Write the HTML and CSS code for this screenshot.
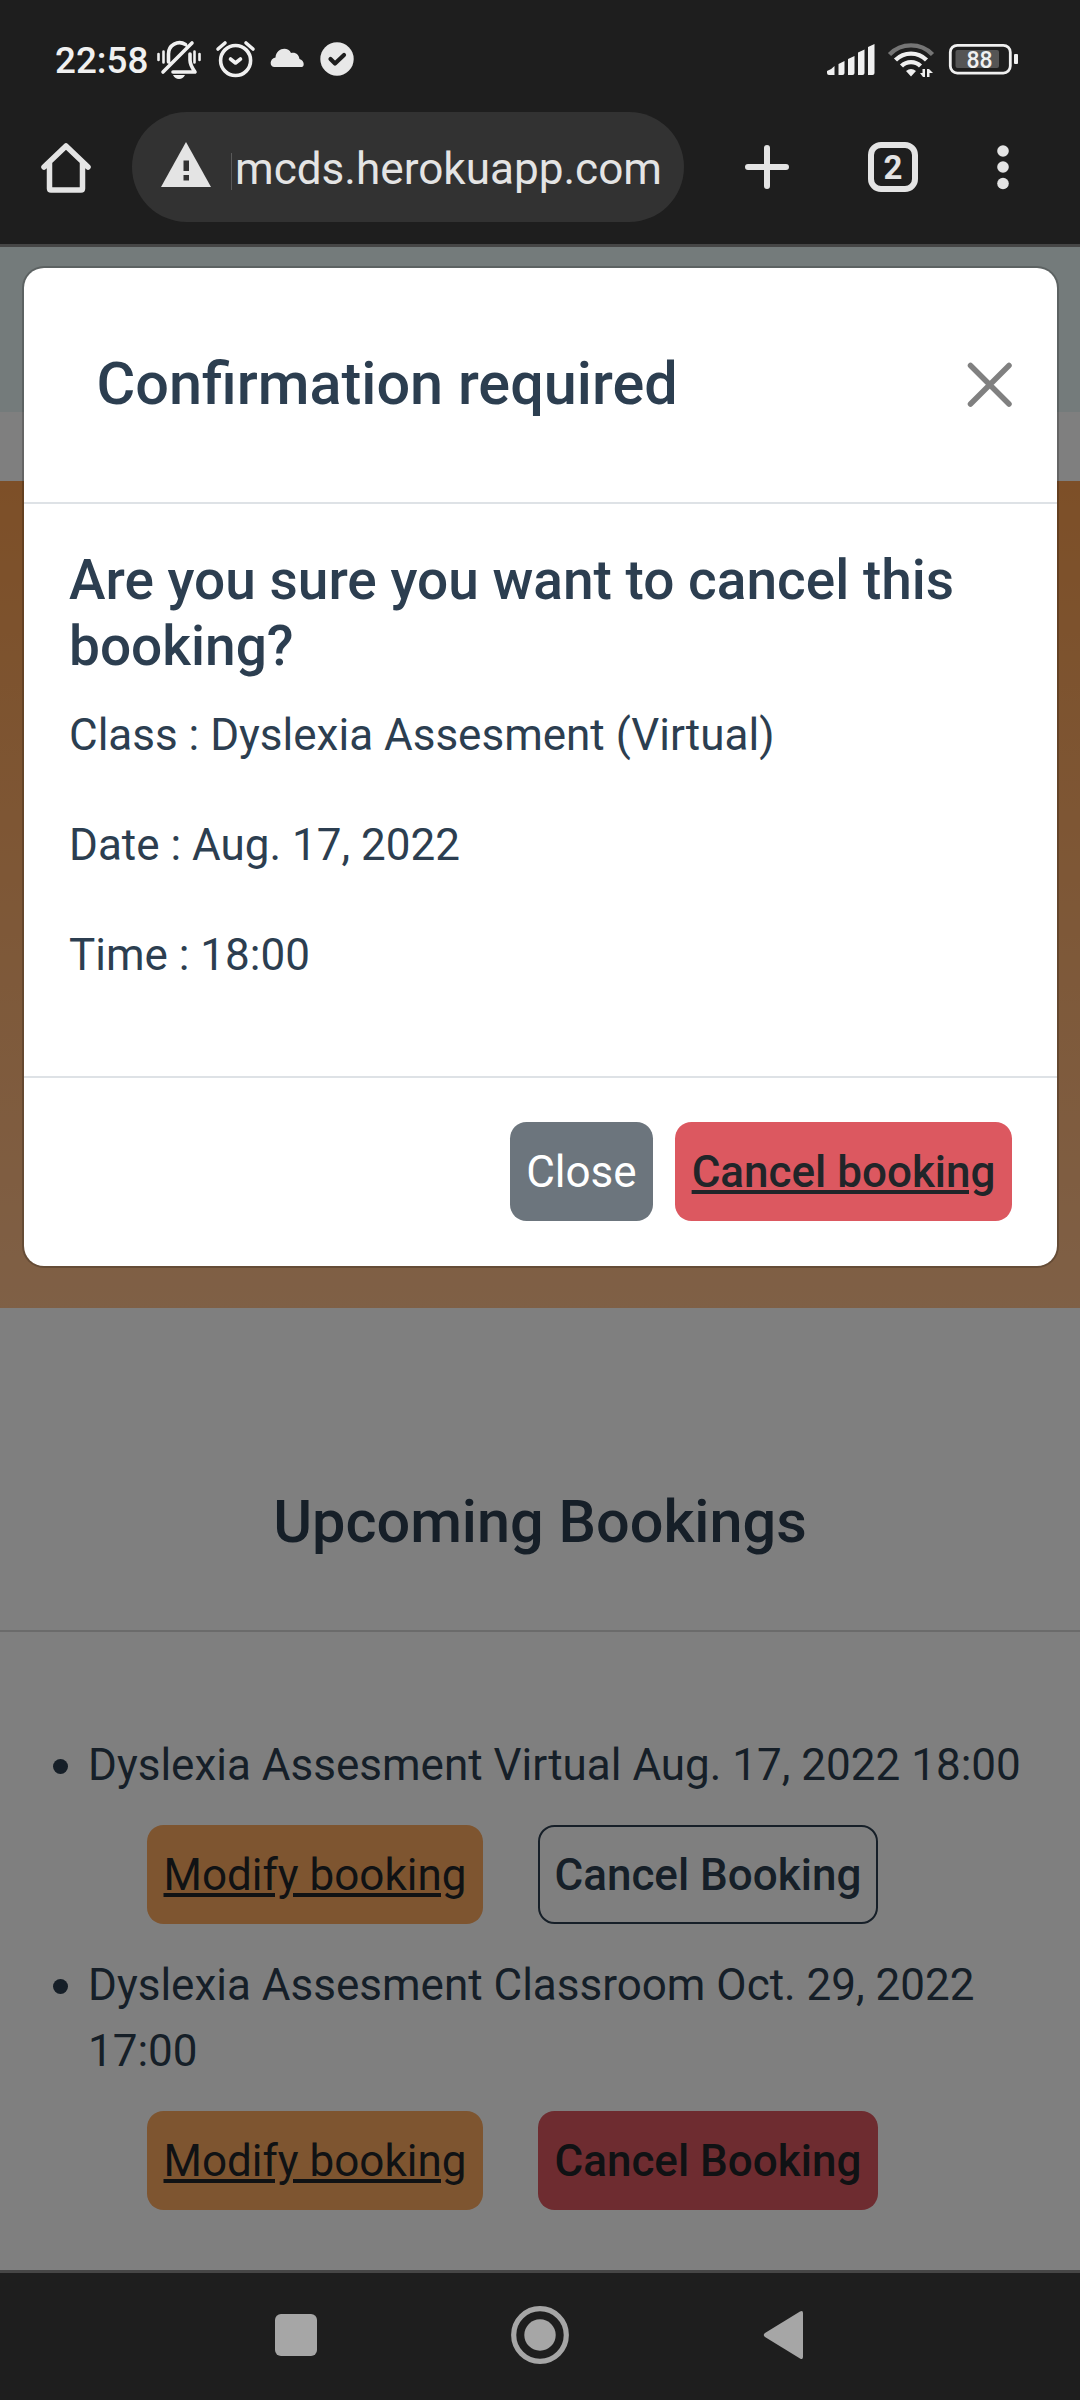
FILE: index.html
```html
<!DOCTYPE html>
<html lang="en">
<head>
<meta charset="utf-8">
<title>Bookings</title>
<link rel="stylesheet" href="styles.css">
</head>
<body>
<div class="phone">
  <header class="chrome">
    <div class="status">
      <span class="clock">22:58</span>
      <svg class="status-left" width="204" height="44" viewBox="156 38 204 44" fill="none" stroke="#f0f0f0" stroke-width="3.600" stroke-linecap="round" stroke-linejoin="round">
        <path d="M168.500 62V54a11 11 0 0 1 17-9.500M190 54v6q0 5 5 12h-22M163 72l29-29"/>
        <path d="M158.500 54v6M163.500 51.500v11M194.500 51.500v11M199.500 54v6" stroke-width="2.600"/>
        <path d="M173 75h12q-2 4-6 4t-6-4z" fill="#f0f0f0" stroke="none"/>
        <circle cx="235.600" cy="60.500" r="15"/>
        <path d="M218 49l7-6M253 49l-7-6M230.500 59l5 4 5-4"/>
        <path d="M274.500 67c-5 0-5.500-8 1-9.500C276 48 288 46 291 53c5-1 8 2 8.500 6 5 1 5.500 8 2 8z" fill="#e8e8e8" stroke="none"/>
        <circle cx="337" cy="59" r="16.700" fill="#e8e8e8" stroke="none"/>
        <path d="M330.500 59l4.500 4.500 9-8.500" stroke="#1e1e1e" stroke-width="4.200"/>
      </svg>
      <svg class="status-right" width="196" height="44" viewBox="826 38 196 44" fill="#f0f0f0">
        <path d="M829 75q-2 0-2-2v-2q4-1 7.500-5v9zM838.500 64l6-3v12q0 2-2 2h-4zM848 59l6.500-3v17q0 2-2 2H848zM858 52.500l6.500-3V73q0 2-2 2H858zM868 47l6.500-3v29q0 2-2 2H868z"/>
        <g fill="none" stroke="#f0f0f0" stroke-width="4.400">
          <path d="M889.500 54.500a30 30 0 0 1 43 0" stroke="#757575"/>
          <path d="M895.500 60a22 22 0 0 1 31 0"/>
          <path d="M901.500 66a13.500 13.500 0 0 1 19 0"/>
        </g>
        <path d="M906 71q5-4 10 0l-5 5.500zM922.500 69h2.500v8h-2l-3-4h2.500zM927 77v-8h2l4 4h-3.500v4z"/>
        <rect x="950.300" y="45.300" width="60" height="27.800" rx="7" fill="none" stroke="#f0f0f0" stroke-width="2.800"/>
        <rect x="955.500" y="50" width="43.500" height="18" rx="2" fill="#555"/>
        <rect x="1014" y="54" width="4" height="10" rx="1"/>
        <text x="979.500" y="67.500" class="charge">88</text>
      </svg>
    </div>
    <div class="toolbar">
      <svg class="home" width="52" height="52" viewBox="40 140 52 52" fill="none" stroke="#e4e4e4" stroke-width="5.500" stroke-linejoin="round" stroke-linecap="round"><path d="M44 166l22-21 22 21M49.500 162v25.500q0 1.500 1.500 1.500h30q1.500 0 1.500-1.500V162"/></svg>
      <div class="omnibox">
        <svg width="52" height="46" viewBox="0 0 52 46"><path d="M26 0L51 45H1z" fill="#e4e4e4"/><path d="M23.500 18.500h5.500v10.500h-5.500zM23.500 33h5.500v5.500h-5.500z" fill="#323232"/></svg>
        <span class="fade"></span><span class="url">mcds.herokuapp.com</span>
      </div>
      <svg class="actions" width="270" height="52" viewBox="744 141 270 52" fill="none" stroke="#e4e4e4" stroke-width="6" stroke-linecap="round">
        <path d="M748 167h38M767 148v38"/>
        <rect x="871" y="145" width="44" height="44" rx="10"/>
        <text x="893" y="179" class="tab-count">2</text>
        <g fill="#e4e4e4" stroke="none"><circle cx="1003" cy="151" r="5.800"/><circle cx="1003" cy="167" r="5.800"/><circle cx="1003" cy="183.500" r="5.800"/></g>
      </svg>
    </div>
  </header>

  <main class="page">
    <div class="topbar"></div>
    <div class="hero"></div>
    <h2 class="heading">Upcoming Bookings</h2>
    <ul class="bookings">
      <li class="booking">
        <p class="booking-name">Dyslexia Assesment Virtual Aug. 17, 2022 18:00</p>
        <div class="booking-actions"><a class="btn btn-modify">Modify booking</a><button class="btn btn-outline">Cancel Booking</button></div>
      </li>
      <li class="booking">
        <p class="booking-name">Dyslexia Assesment Classroom Oct. 29, 2022 17:00</p>
        <div class="booking-actions"><a class="btn btn-modify">Modify booking</a><button class="btn btn-danger">Cancel Booking</button></div>
      </li>
    </ul>
    <div class="backdrop"></div>
    <section class="modal">
      <div class="modal-header">
        <h5 class="modal-title">Confirmation required</h5>
        <svg width="46" height="46" viewBox="0 0 46 46" stroke="#808080" stroke-width="5.500" stroke-linecap="round"><path d="M3.500 3.500l38.500 38.500M42 3.500L3.500 42"/></svg>
      </div>
      <div class="modal-body">
        <h5 class="question">Are you sure you want to cancel this booking?</h5>
        <p class="detail">Class : Dyslexia Assesment (Virtual)</p>
        <p class="detail">Date : Aug. 17, 2022</p>
        <p class="detail">Time : 18:00</p>
      </div>
      <div class="modal-footer">
        <button class="btn btn-close">Close</button>
        <a class="btn btn-danger btn-link">Cancel booking</a>
      </div>
    </section>
  </main>

  <nav class="navbar">
    <svg width="530" height="62" viewBox="274 2304 530 62" fill="#a6a6a6">
      <rect x="275" y="2314" width="42" height="42" rx="6"/>
      <circle cx="540" cy="2335" r="26.300" fill="none" stroke="#a6a6a6" stroke-width="5.200"/>
      <circle cx="540" cy="2335" r="15.700"/>
      <path d="M765 2333L800 2311.500Q803 2310 803 2313V2357Q803 2360 800 2358.500L765 2337Q762.500 2335 765 2333z"/>
    </svg>
  </nav>
</div>
</body>
</html>
```
FILE: styles.css
```css
*{box-sizing:border-box}
body{margin:0;font-family:Roboto,sans-serif;color:#2c3e50}
h2,h5,p,ul{margin:0;padding:0;font-weight:400}
svg{display:block;flex:none}
.phone{width:1080px;height:2400px;display:flex;flex-direction:column;overflow:hidden;background:#1e1e1e}

/* Browser chrome */
.chrome{height:247px;border-bottom:3px solid #464646}
.status{display:flex;height:112px;padding:38px 58px 0 55px}
.clock{width:101px;font-size:36.800px;font-weight:500;line-height:45px;color:#f0f0f0}
.status-right{margin-left:auto}
.charge{font-size:23px;font-weight:500;text-anchor:middle}
.toolbar{display:flex;align-items:center;height:110px;padding:0 66px 0 40px}
.omnibox{display:flex;align-items:center;width:552px;height:110px;margin-left:40px;padding:0 0 0 28px;border-radius:55px;background:#323232;color:#e4e4e4}
.omnibox svg{margin-bottom:5px}
.fade{width:1px;height:37px;margin:8px 3px 0 19px;background:#5a5a5a}
.url{padding-top:3px;font-size:44.100px;line-height:54px;white-space:nowrap}
.actions{margin-left:auto}
.tab-count{font-size:33px;font-weight:700;text-anchor:middle;fill:#e4e4e4;stroke:none}

/* Bookings page */
.page{position:relative;height:2023px;background:#fff}
.topbar{height:165px;background:#e8f6f6}
.hero{height:827px;margin-top:69px;background:linear-gradient(#fa9f50,#ffc08c)}
.heading{height:324px;padding-top:179px;border-bottom:2px solid #d6d6d6;font-size:59.4px;font-weight:500;line-height:71px;text-align:center}
.bookings{padding:100px 27px 0 88px;list-style:none}
.booking{margin-bottom:28px}
.booking-name{font-size:44px;line-height:66px;position:relative}
.booking-name::before{content:"";position:absolute;left:-35px;top:27px;width:15px;height:15px;border-radius:50%;background:#2c3e50}
.booking-actions{display:flex;gap:55px;margin-top:27px;padding-left:59px}
.btn{height:99px;padding:1px 16.500px 0;border:0;border-radius:16.500px;font:400 44px/99px Roboto,sans-serif;color:#212529;white-space:nowrap}
.btn-modify{background:#fcaa60;text-decoration:underline}
.btn-outline{padding:1px 14.500px 0;border:2px solid #2c3e50;background:transparent;color:#2c3e50;font-weight:500;line-height:95px}
.btn-danger{background:#dc5860;font-weight:500}
.btn-link{text-decoration:underline}
.btn-close{background:#6c757d;color:#fff}

/* Dialog */
.backdrop{position:absolute;inset:0;background:rgba(0,0,0,.5)}
.modal{position:absolute;top:19px;left:22px;width:1037px;border:2px solid rgba(0,0,0,.2);border-radius:22px;background:#fff;background-clip:padding-box}
.modal-header{display:flex;align-items:center;justify-content:space-between;height:236px;padding:0 44px 0 72.500px;border-bottom:2px solid #dee2e6}
.modal-title{padding-bottom:1px;font-size:59.4px;font-weight:500;line-height:71px}
.modal-body{padding:43px 44px 44px 45px}
.question{margin-bottom:23px;font-size:55px;font-weight:500;line-height:66px}
.detail{margin-bottom:44px;font-size:44px;line-height:66px}
.modal-footer{display:flex;justify-content:flex-end;gap:22px;padding:44px 45px 45px;border-top:2px solid #dee2e6}

/* System navigation */
.navbar{height:130px;padding:31px 276px 0 274px;border-top:3px solid #464646;background:#1e1e1e}
```
